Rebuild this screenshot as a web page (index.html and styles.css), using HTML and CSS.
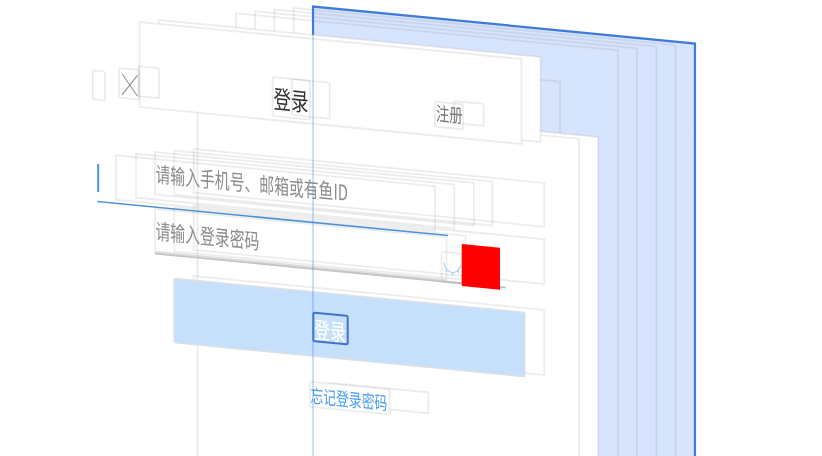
FILE: index.html
```html
<!DOCTYPE html>
<html>
<head>
  <meta charset="utf-8">
  <meta name="viewport" content="width=device-width, initial-scale=1.0">
  <link rel="stylesheet" href="styles.css">
</head>
<body>
  <!-- exploded view hierarchy: every layer sits in a skewed plane, so y here is y minus slope * x on screen -->
  <svg class="stage" width="822" height="456" viewBox="0 0 822 456">
    <g transform="matrix(1 .0969 0 1 0 0)">
      <!-- window and its containers -->
      <rect class="root" x="313" y="-23.8" width="382" height="600"/>
      <rect class="view" x="293.7" y="-20.5" width="382" height="600"/>
      <rect class="view" x="274.4" y="-17.1" width="382" height="600"/>
      <rect class="view" x="255" y="-13.4" width="382" height="600"/>
      <rect class="view" x="236" y="-9.6" width="382" height="600"/>
      <path class="root-edge" d="M313 100V-23.8H695V600"/>
      <rect class="view" x="520" y="27.4" width="40" height="59.3"/>
      <rect class="sheet" x="216.7" y="79" width="381.3" height="600"/>
      <rect class="sheet" x="197.5" y="82.7" width="381.5" height="600"/>

      <!-- nav bar -->
      <rect class="sheet" x="158.7" y="4.6" width="381.8" height="85"/>
      <rect class="sheet" x="139.5" y="8.5" width="382" height="85"/>
      <rect class="view" x="92.7" y="61.3" width="12.3" height="29" rx="1.5"/>
      <rect class="view" x="119" y="56.5" width="20" height="29.5" rx="1"/>
      <rect class="view" x="138.5" y="52.9" width="20.5" height="30" rx="1"/>
      <path class="close-x" d="M122 62L137.5 83M137.5 62L122 83"/>
      <rect class="view" x="272.7" y="50.6" width="37.3" height="39" rx="1"/>
      <rect class="view" x="292" y="50.7" width="37.7" height="36" rx="1"/>
      <text class="title" transform="translate(273.5 81.5) scale(.7 1)">登录</text>
      <rect class="view" x="435" y="59.5" width="28" height="25" rx="1"/>
      <rect class="view" x="454" y="57" width="29.6" height="22" rx="1"/>
      <text class="nav-link" transform="translate(436 78) scale(.7 1)">注册</text>

      <!-- account field -->
      <rect class="view" x="116" y="144.1" width="319" height="44.5"/>
      <rect class="view" x="136" y="140.5" width="318.3" height="44"/>
      <rect class="view" x="155" y="137" width="319" height="42.5"/>
      <rect class="view" x="174.3" y="133.8" width="318" height="44"/>
      <rect class="view" x="193.7" y="130.2" width="350.6" height="43.7"/>
      <text class="hint" transform="translate(155.5 167) scale(.7 1)">请输入手机号、邮箱或有鱼ID</text>
      <rect class="caret" x="97.2" y="154.6" width="2" height="28"/>
      <rect class="caret" x="97.3" y="191.3" width="350.7" height="1.6"/>

      <!-- password field -->
      <rect class="view" x="155" y="194" width="291.5" height="42.7"/>
      <rect class="view" x="174.3" y="190.6" width="291.4" height="44"/>
      <rect class="view" x="193.7" y="186.5" width="350.6" height="44.7"/>
      <text class="hint" transform="translate(155.5 224) scale(.7 1)">请输入登录密码</text>
      <rect class="rule-light" x="155" y="236" width="291" height="1.6"/>
      <rect class="rule-dark" x="155" y="237.6" width="350.7" height="1.8"/>
      <rect class="view" x="441.7" y="208.9" width="21" height="30" rx="1"/>
      <path class="eye" d="M444 219.5Q444.5 227 452.5 229Q460 227 460.7 220M452.5 229V232M447.5 226.5L446 228.5M457.5 226.5L459 228.5"/>
      <rect class="badge" x="461.7" y="199.3" width="38.3" height="42"/>

      <!-- submit -->
      <rect class="view" x="193.7" y="257.2" width="350.6" height="65"/>
      <rect class="submit" x="174" y="261.4" width="351" height="64.5" rx="2"/>
      <text class="submit-label" transform="translate(314 307.5) scale(.7 1)">登录</text>
      <rect class="picked" x="313.3" y="282.3" width="34.4" height="28.5" rx="1.5"/>

      <!-- forgot password -->
      <rect class="view" x="329.5" y="350.9" width="98.8" height="20.9"/>
      <rect class="sheet" x="310" y="351.7" width="79.7" height="25" rx="1"/>
      <text class="forgot" transform="translate(310.5 372.5) scale(.7 1)">忘记登录密码</text>

      <!-- selection outline shows through everything above it -->
      <path class="root-ghost" d="M313 0V600"/>
    </g>
  </svg>
</body>
</html>
```

FILE: styles.css
```css
* {
  box-sizing: border-box;
  margin: 0;
  padding: 0;
}

body {
  background-color: #fff;
  overflow: hidden;
}

.stage {
  display: block;
  filter: blur(0.3px);
}

text {
  font-family: "Noto Sans CJK SC", "Noto Sans", sans-serif;
  font-weight: 400;
}

.root {
  fill: #d6e4fd;
}

.root-edge {
  fill: none;
  stroke: #3f7bd9;
  stroke-width: 2.2;
}

.root-ghost {
  fill: none;
  stroke: #3f7bd9;
  stroke-opacity: 0.25;
  stroke-width: 2;
}

.view {
  fill: none;
  stroke: #777;
  stroke-opacity: 0.14;
  stroke-width: 1.8;
}

.sheet {
  fill: #fff;
  stroke: #777;
  stroke-opacity: 0.14;
  stroke-width: 1.8;
}

.close-x {
  fill: none;
  stroke: #8c8c8c;
  stroke-width: 1;
}

.title {
  font-size: 25px;
  fill: #333;
}

.nav-link {
  font-size: 19px;
  fill: #777;
}

.hint {
  font-size: 21.2px;
  fill: #8c8c8c;
}

.caret {
  fill: #4d93dc;
}

.rule-light {
  fill: #dedede;
}

.rule-dark {
  fill: #c4c4c4;
}

.eye {
  fill: none;
  stroke: #a9d2f7;
  stroke-width: 1.1;
}

.badge {
  fill: #f00;
}

.submit {
  fill: #c6e0fb;
  stroke: #e0e0e0;
  stroke-width: 1.2;
}

.submit-label {
  font-size: 22.8px;
  fill: #fff;
}

.picked {
  fill: none;
  stroke: #3f73c9;
  stroke-width: 2;
}

.forgot {
  font-size: 18.3px;
  fill: #4a9df0;
}
```
